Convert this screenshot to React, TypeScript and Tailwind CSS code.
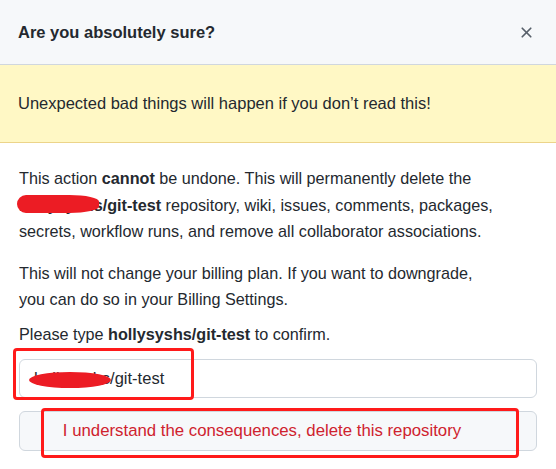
import { X } from "lucide-react";

const Scribble = ({ className }: { className: string }) => (
  <span className={`absolute bg-[#ec1c24] rounded-[50%] ${className}`} />
);

const App = () => {
  return (
    <div className="w-[556px] h-[469px] bg-white text-[#24292f] font-['Liberation_Sans',Arial,sans-serif] overflow-hidden relative">
      {/* header */}
      <div className="h-[65px] bg-[#f6f8fa] border-b border-[#d0d7de] flex items-center justify-between pl-[18px] pr-[21px]">
        <h3 className="text-[16.5px] font-semibold">Are you absolutely sure?</h3>
        <X size={17} strokeWidth={2.4} className="text-[#57606a]" />
      </div>

      {/* flash */}
      <div className="h-[78px] bg-[#fff8c5] border-b border-[#ecd48a] flex items-center pl-[18px] text-[16.5px]">
        Unexpected bad things will happen if you don’t read this!
      </div>

      {/* body */}
      <div className="px-[19px] pt-[22px] text-[16.2px] leading-[26.5px]">
        <div className="pr-[42px]">
          <p className="relative">
            This action <b>cannot</b> be undone. This will permanently delete the{" "}
            <b>hollysyshs/git-test</b> repository, wiki, issues, comments, packages, secrets, workflow runs, and
            remove all collaborator associations.
            <Scribble className="left-[-2px] top-[30px] w-[82px] h-[18px] rounded-l-[10px] rounded-r-[40%]" />
          </p>
          <p className="mt-[15px]">
            This will not change your billing plan. If you want to downgrade, you can do so in your Billing Settings.
          </p>
          <p className="mt-[8px]">
            Please type <b>hollysyshs/git-test</b> to confirm.
          </p>
        </div>

        <div className="relative mt-[12px]">
          <div className="h-[39px] border border-[#d0d7de] rounded-[6px] flex items-center pl-[14px] text-[16.5px]">
            hollysyshs/git-test
          </div>
          <Scribble className="left-[10px] top-[13px] w-[82px] h-[16px]" />
          <span className="absolute left-[-6px] top-[-11px] w-[181px] h-[52px] border-[3px] border-[#ff1a1a] rounded-[4px]" />
        </div>

        <div className="relative mt-[13px]">
          <button className="w-full h-[40px] bg-[#f6f8fa] border border-[#d0d7de] rounded-[6px] text-[#cf222e] text-[16.8px] pr-[32px]">
            I understand the consequences, delete this repository
          </button>
          <span className="absolute left-[22px] top-[-3px] w-[478px] h-[50px] border-[3px] border-[#ff1a1a] rounded-[4px]" />
        </div>
      </div>
    </div>
  );
};

export default App;
